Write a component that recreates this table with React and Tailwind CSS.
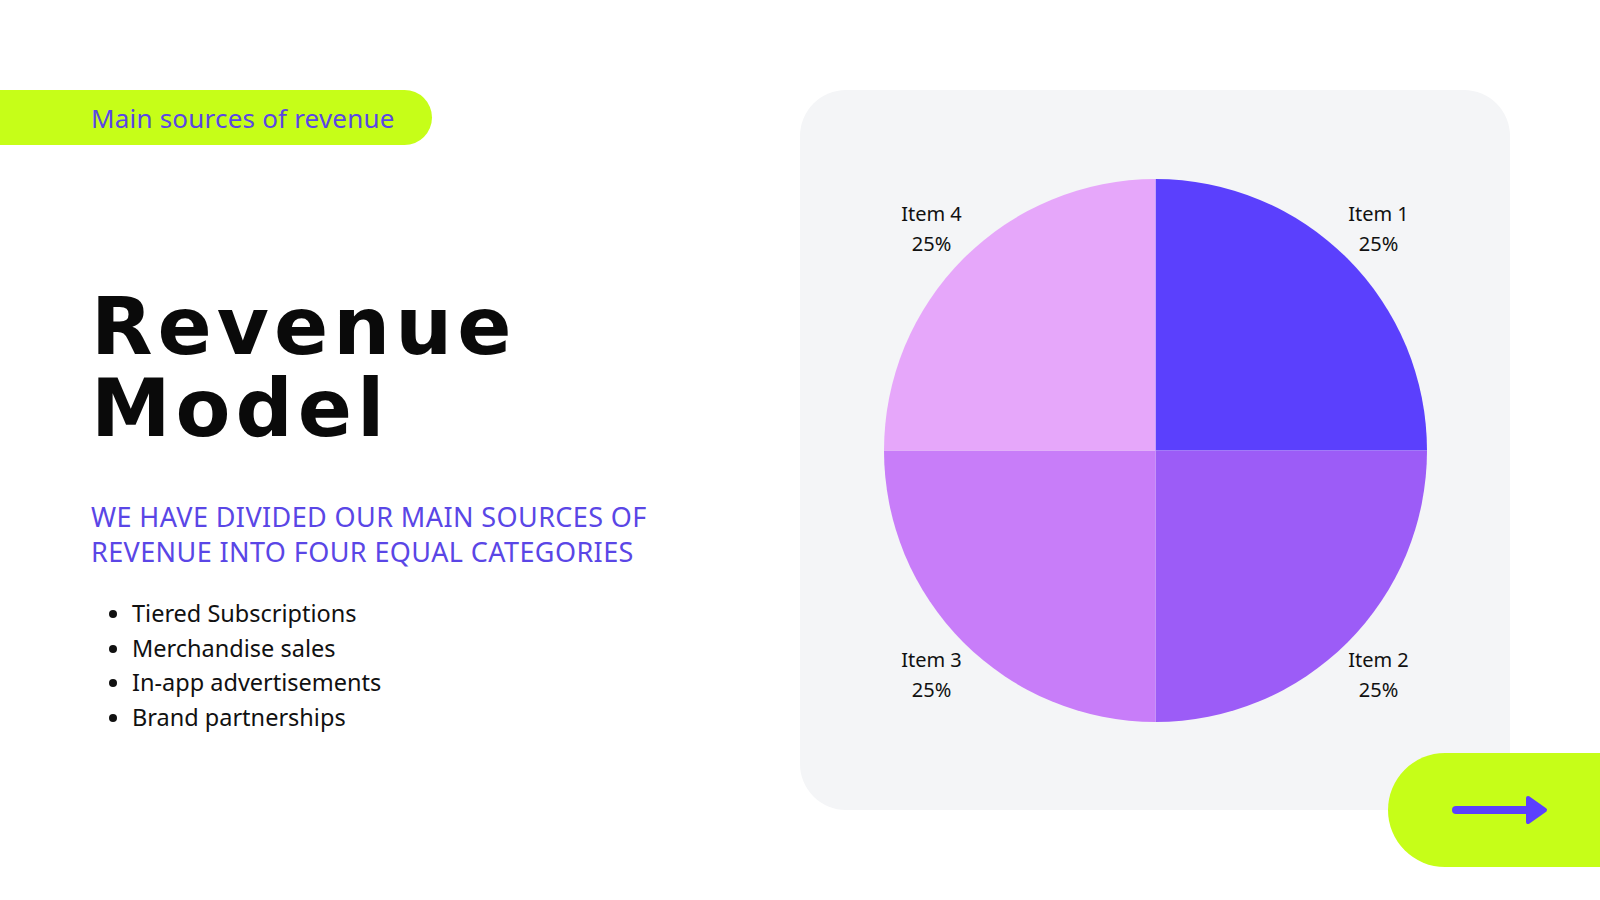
import React from 'react';

const slices = [
  { d: 'M271.5 271.5 L271.5 0 A271.5 271.5 0 0 1 543 271.5 Z', fill: '#5b40fd' },
  { d: 'M271.5 271.5 L543 271.5 A271.5 271.5 0 0 1 271.5 543 Z', fill: '#9c5cf7' },
  { d: 'M271.5 271.5 L271.5 543 A271.5 271.5 0 0 1 0 271.5 Z', fill: '#c87df9' },
  { d: 'M271.5 271.5 L0 271.5 A271.5 271.5 0 0 1 271.5 0 Z', fill: '#e6a7fa' },
];

const labels = [
  { name: 'Item 1', pos: 'left-[495px] top-[20px]' },
  { name: 'Item 2', pos: 'left-[495px] top-[466px]' },
  { name: 'Item 3', pos: 'left-[48px] top-[466px]' },
  { name: 'Item 4', pos: 'left-[48px] top-[20px]' },
];

const items = ['Tiered Subscriptions', 'Merchandise sales', 'In-app advertisements', 'Brand partnerships'];

export default function App() {
  return (
    <div className="relative w-[1600px] h-[900px] bg-white overflow-hidden flex font-['Noto_Sans',sans-serif]">
      {/* Left column */}
      <div className="w-[800px] pt-[90px] flex flex-col">
        <div className="h-[55px] w-[432px] bg-[#c6fe18] rounded-r-full flex items-center pl-[91px]">
          <span className="text-[26px] text-[#5a46e6] leading-none tracking-[0.2px]">Main sources of revenue</span>
        </div>

        <h1 className="mt-[141px] pl-[91px] text-[80px] leading-[82px] font-bold text-[#0a0a0a] font-['DejaVu_Sans',sans-serif] tracking-[5px]">
          Revenue<br />Model
        </h1>

        <p className="mt-[49px] pl-[91px] text-[27px] leading-[35px] text-[#5a46e6] uppercase tracking-[0.4px]">
          We have divided our main sources of<br />revenue into four equal categories
        </p>

        <ul className="mt-[27px] pl-[132px] list-disc text-[23.5px] leading-[34.5px] text-[#111111]">
          {items.map(i => (
            <li key={i}>{i}</li>
          ))}
        </ul>
      </div>

      {/* Chart panel */}
      <div className="mt-[90px] w-[710px] h-[720px] rounded-[46px] bg-[#f4f5f7] flex items-center justify-center">
        <div className="relative w-[543px] h-[543px]">
          <svg width="543" height="543" viewBox="0 0 543 543">
            {slices.map((s, i) => (
              <path key={i} d={s.d} fill={s.fill} />
            ))}
          </svg>
          {labels.map(l => (
            <div key={l.name} className={`absolute ${l.pos} -translate-x-1/2 whitespace-nowrap text-center text-[20px] leading-[30px] text-[#111111]`}>
              <div>{l.name}</div>
              <div>25%</div>
            </div>
          ))}
        </div>
      </div>

      {/* Next button */}
      <div className="absolute right-0 top-[753px] w-[212px] h-[114px] bg-[#c6fe18] rounded-l-full flex items-center pl-[64px]">
        <svg width="96" height="30" viewBox="0 0 96 30">
          <line x1="4" y1="15" x2="80" y2="15" stroke="#5b40fd" strokeWidth="8" strokeLinecap="round" />
          <path d="M76 3 L93 15 L76 27 Z" fill="#5b40fd" stroke="#5b40fd" strokeWidth="4" strokeLinejoin="round" />
        </svg>
      </div>
    </div>
  );
}
